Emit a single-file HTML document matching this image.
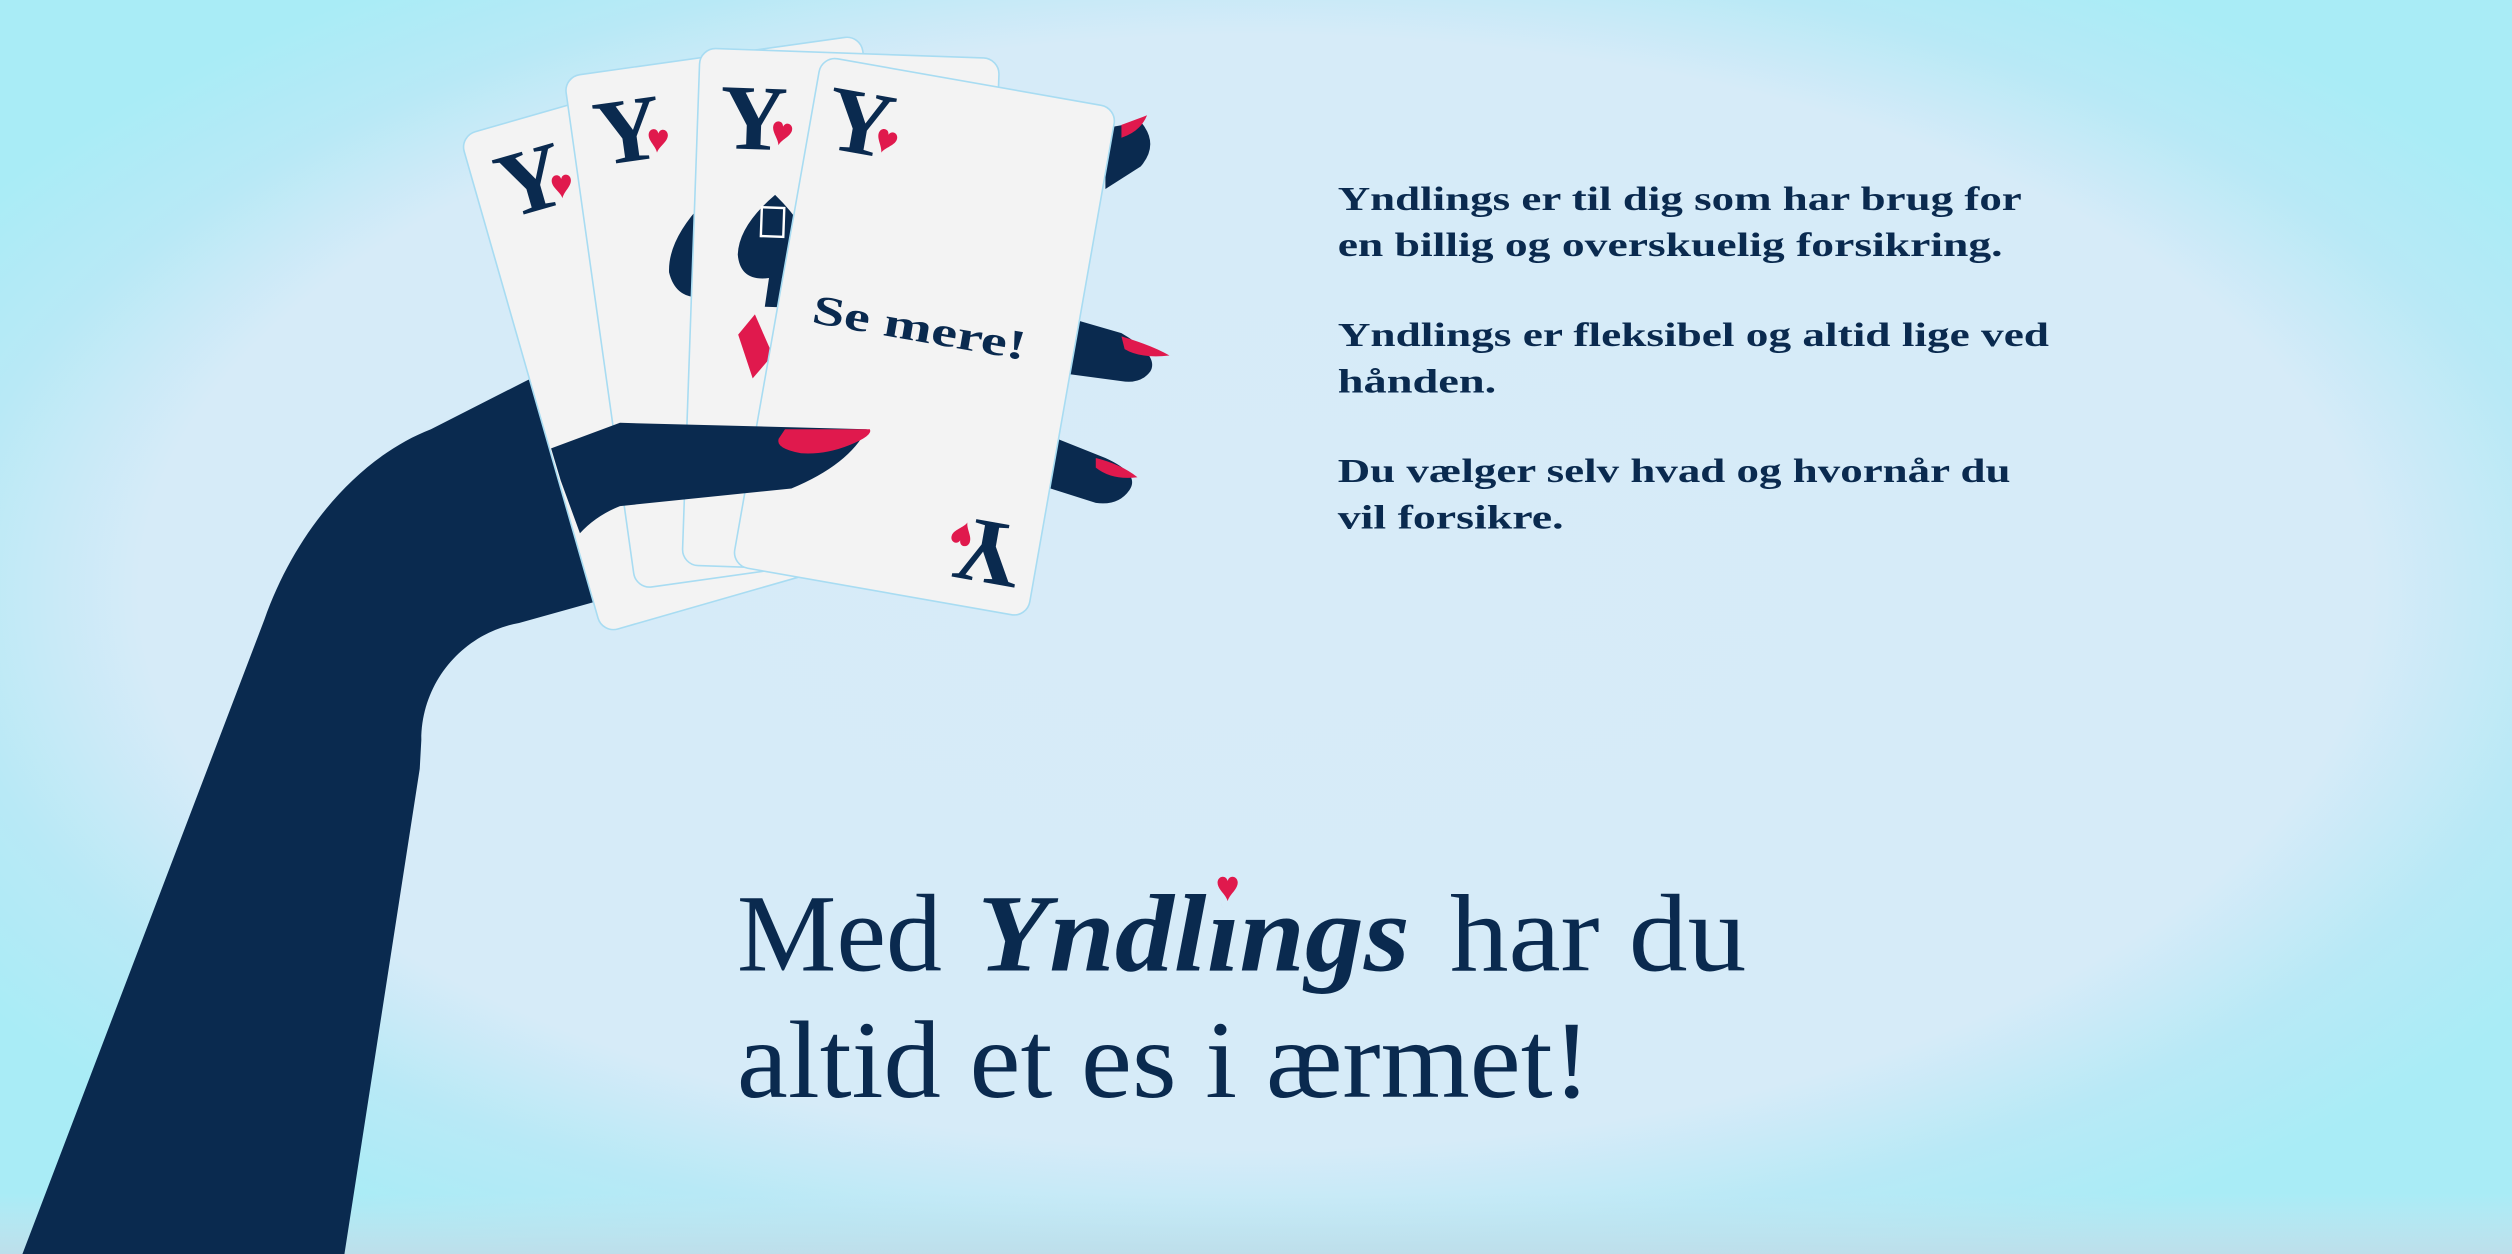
<!DOCTYPE html>
<html><head><meta charset="utf-8"><style>
html,body{margin:0;padding:0;width:2512px;height:1254px;overflow:hidden;background:#d6ebf8}
svg{display:block}
</style></head><body>
<svg width="2512" height="1254" viewBox="0 0 1568 783" preserveAspectRatio="none" xmlns="http://www.w3.org/2000/svg">
<defs>
<radialGradient id="bg" cx="50%" cy="48%" r="60%" fx="50%" fy="45%">
<stop offset="0" stop-color="#d7ebf8"/>
<stop offset="0.74" stop-color="#d6ebf8"/>
<stop offset="0.87" stop-color="#b8e9f6"/>
<stop offset="1" stop-color="#a9ecf6"/>
</radialGradient>
<linearGradient id="bot" x1="0" y1="0" x2="0" y2="1">
<stop offset="0" stop-color="#c7e3ef" stop-opacity="0"/>
<stop offset="1" stop-color="#bfdde9" stop-opacity="0.9"/>
</linearGradient>
<path id="h" d="M0 3 C0 -1 5 -2 6 2 C7 -2 12 -1 12 3 C12 7 7 10 6 14 C5 10 0 7 0 3Z"/>
</defs>
<rect width="1568" height="783" fill="url(#bg)"/>
<rect y="745" width="1568" height="38" fill="url(#bot)"/>

<!-- fingers behind -->
<g fill="#0a2a4f">
<path d="M690 80 L712 76 Q724 90 712 104 L690 118 Z"/>
<path d="M655 195 L700 208 Q724 222 718 232 Q712 240 700 238 L655 232 Z"/>
<path d="M645 268 L690 286 Q712 296 705 306 Q698 316 684 314 L640 300 Z"/>
</g>
<g fill="#e0194d">
<path d="M700 78 L716 72 Q712 82 700 86 Z"/>
<path d="M700 210 Q720 216 730 222 Q712 224 702 218 Z"/>
<path d="M684 286 Q700 290 710 298 Q694 300 684 292 Z"/>
</g>

<!-- arm -->
<path fill="#0a2a4f" d="M14 783 L165 387 C185 330 225 285 269 268 L330 237 L387 264 L541 268 Q530 290 494 305 L387 316 Q372 322 362 333 L374 375 L324 389 C290 395 263 425 263 462 L262 480 L215 783 Z"/>

<!-- cards -->
<g stroke="#a8dcf2" stroke-width="1" fill="#f3f3f3">
<g transform="translate(287,85) rotate(-16)">
<rect x="0" y="0" width="187" height="323" rx="10"/>
<text x="14" y="58" font-family="Liberation Serif,serif" font-weight="bold" font-size="58" fill="#0a2a4f" stroke="none">Y</text>
<use href="#h" transform="translate(48,40) rotate(12)" fill="#e0194d" stroke="none"/>
<text transform="translate(95,270) rotate(180)" font-family="Liberation Serif,serif" font-weight="bold" font-size="30" fill="#0a2a4f" stroke="none">Yn</text>
</g>
<g transform="translate(352,48) rotate(-8)">
<rect x="0" y="0" width="187" height="323" rx="10"/>
<text x="14" y="58" font-family="Liberation Serif,serif" font-weight="bold" font-size="58" fill="#0a2a4f" stroke="none">Y</text>
<use href="#h" transform="translate(48,40) rotate(12)" fill="#e0194d" stroke="none"/>
<path d="M75 90 Q50 110 48 130 Q50 150 72 148 L70 168 L82 168 L80 148 Q100 150 100 130 Q98 110 75 90Z" fill="#0a2a4f" stroke="none"/>
<path d="M68 128 q4-10 10-4 q4 8 -4 12 q-8 0 -6 -8z" fill="#fff" stroke="none"/>
</g>
<g transform="translate(437,30) rotate(2)">
<rect x="0" y="0" width="187" height="323" rx="10"/>
<text x="14" y="62" font-family="Liberation Serif,serif" font-weight="bold" font-size="58" fill="#0a2a4f" stroke="none">Y</text>
<use href="#h" transform="translate(48,44) rotate(12)" fill="#e0194d" stroke="none"/>
<path d="M50 90 Q28 110 28 128 Q30 145 48 142 L46 160 L58 160 L56 142 Q75 145 75 128 Q72 110 50 90Z" fill="#0a2a4f" stroke="none"/>
<rect x="42" y="98" width="14" height="18" fill="none" stroke="#fff" stroke-width="1.5"/>
<path d="M30 178 L40 165 L52 190 L40 205 Z" fill="#e0194d" stroke="none"/>
</g>
<g transform="translate(513,35) rotate(10)">
<rect x="0" y="0" width="187" height="323" rx="10"/>
<text x="10" y="56" font-family="Liberation Serif,serif" font-weight="bold" font-size="58" fill="#0a2a4f" stroke="none">Y</text>
<use href="#h" transform="translate(44,38) rotate(12)" fill="#e0194d" stroke="none"/>
<text x="22" y="165" font-family="Liberation Serif,serif" font-weight="bold" font-size="26" fill="#0a2a4f" stroke="none" textLength="135" lengthAdjust="spacingAndGlyphs">Se mere!</text>
<g transform="translate(177,268) rotate(180)">
<text x="0" y="0" font-family="Liberation Serif,serif" font-weight="bold" font-size="58" fill="#0a2a4f" stroke="none">Y</text>
<use href="#h" transform="translate(34,-18) rotate(12)" fill="#e0194d" stroke="none"/>
</g>
</g>
</g>

<!-- thumb over cards -->
<path fill="#0a2a4f" d="M344 280 L387 264 L541 268 Q530 290 494 305 L387 316 Q372 322 362 333 L350 300 Z"/>
<path fill="#e0194d" d="M490 268 L543 268 Q545 272 530 278 Q515 284 500 283 Q484 280 486 274 Z"/>

<!-- right text -->
<g font-family="Liberation Serif,serif" font-weight="bold" font-size="21" fill="#0a2a4f">
<text x="835" y="131" textLength="427" lengthAdjust="spacingAndGlyphs">Yndlings er til dig som har brug for</text>
<text x="835" y="160" textLength="415" lengthAdjust="spacingAndGlyphs">en billig og overskuelig forsikring.</text>
<text x="835" y="216" textLength="444" lengthAdjust="spacingAndGlyphs">Yndlings er fleksibel og altid lige ved</text>
<text x="835" y="245" textLength="99" lengthAdjust="spacingAndGlyphs">hånden.</text>
<text x="835" y="301" textLength="420" lengthAdjust="spacingAndGlyphs">Du vælger selv hvad og hvornår du</text>
<text x="835" y="330" textLength="141" lengthAdjust="spacingAndGlyphs">vil forsikre.</text>
</g>

<!-- headline -->
<g font-family="Liberation Serif,serif" font-size="69" fill="#0a2a4f">
<text x="460" y="606" textLength="128" lengthAdjust="spacingAndGlyphs">Med</text>
<text x="610" y="606" font-style="italic" font-weight="bold" textLength="270" lengthAdjust="spacingAndGlyphs">Yndlings</text>
<text x="905" y="606" textLength="185" lengthAdjust="spacingAndGlyphs">har du</text>
<text x="460" y="685" textLength="533" lengthAdjust="spacingAndGlyphs">altid et es i ærmet!</text>
</g>
<ellipse cx="768" cy="563" rx="6" ry="6" fill="#d6ebf8"/>
<use href="#h" transform="translate(760,548) scale(1.05)" fill="#e0194d"/>
</svg>
</body></html>
